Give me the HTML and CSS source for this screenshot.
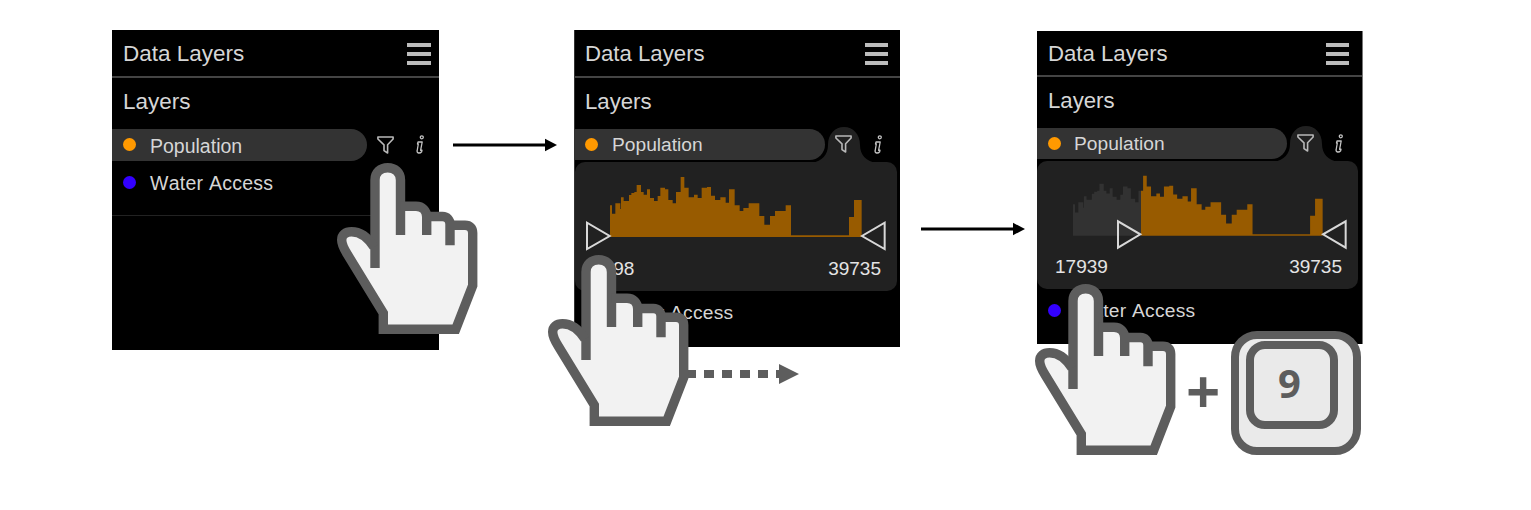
FILE: index.html
```html
<!DOCTYPE html>
<html lang="en">
<head>
<meta charset="utf-8">
<title>Data Layers</title>
<link rel="stylesheet" href="styles.css">
</head>
<body>
<svg class="defs" width="0" height="0" aria-hidden="true">
  <defs>
    <g id="hand">
      <path fill="#f2f2f2" stroke="none" d="M38 84C33 76 26 68.7 14.5 68.7C8 68.7 4.7 72 4.7 77C4.700 82 7 86 10 91L46.500 149.500V166H119L135.700 122V73C135.700 66 132 62.300 126 62.300H113C113 57 108 53.700 103 53.700H89.700C89.700 47 85 43.300 79 43.300H63.500V17C63.500 10 58 4.600 50.700 4.600S38 10 38 17Z"/>
      <g fill="none" stroke="#5d5d5d" stroke-width="9.400">
        <path d="M38 105V17C38 9.500 43.500 4.700 50.700 4.700S63.500 9.500 63.500 17V72"/>
        <path d="M63.500 43.300H79C85.500 43.300 89.700 47.500 89.700 54V72"/>
        <path d="M90 53.500H105.500C110 53.500 113 56.500 113 61.500V82.300"/>
        <path d="M113 62.300H128C133 62.300 135.700 65 135.700 70V122.500L118.700 166.200H46.300V150L10.500 91.500C7 86 4.700 82 4.700 77C4.700 71.500 8.500 68.700 14.500 68.700C24 68.700 31 74.500 37 84"/>
      </g>
    </g>
    <g id="funnel" fill="none" stroke="#b8b8b8" stroke-width="1.600" stroke-linejoin="round">
      <path d="M.9 1H16.100V3L10.600 8.800V17L7 14.600V8.800L.9 3Z"/>
    </g>
    <g id="info" fill="none" stroke="#c4c4c4" stroke-width="1.300" stroke-linejoin="round">
      <circle cx="5.800" cy="2.300" r="1.500"/>
      <path d="M2 7H6.200L4.600 15.300L6 15.200L5.700 16.700Q4.400 18.200 2.600 18Q.7 17.600 1.200 15.500L2.300 9H1.500Z"/>
    </g>
    <path id="bars" d="M0 95V0H6V25H16V-6H31V11H33V-24H41V-13H57V-31H64V-37H73V-40H80V-61H93V-40H101V-32H111V-48H120V-22H132V-13H143V-28H151V-53H165V-48H175V-16H188V-6H198V-40H212V-85H223V-53H236V-24H252V-32H263V-22H275V-53H291V-55H303V-29H315V-16H331V-24H347V-8H357V-48H374V0H389V17H400V8H416V-6H448V32H463V58H480V32H495V17H527V0H543V90H717V35H732V-16H755V95Z"/>
    <clipPath id="excluded"><rect x="0" y="-90" width="205.600" height="190"/></clipPath>
    <clipPath id="included"><rect x="205.600" y="-90" width="560" height="190"/></clipPath>
  </defs>
</svg>

<main class="steps">
  <section class="panel panel-a">
    <header class="head"><h1>Data Layers</h1><span class="menu"><i></i><i></i><i></i></span></header>
    <h2>Layers</h2>
    <div class="row">
      <div class="pill"><span class="dot orange"></span><span class="name">Population</span></div>
      <svg class="funnel" width="17" height="18"><use href="#funnel"/></svg>
      <svg class="info" width="8" height="19"><use href="#info"/></svg>
    </div>
    <div class="row plain"><span class="dot blue"></span><span class="name">Water Access</span></div>
    <svg class="hand" width="141" height="172"><use href="#hand"/></svg>
  </section>

  <svg class="arrow arrow-a" width="104" height="14"><path d="M0 7H94" stroke="#000" stroke-width="3"/><path d="M92 .8L104 7L92 13.200Z"/></svg>

  <section class="panel panel-b">
    <header class="head"><h1>Data Layers</h1><span class="menu"><i></i><i></i><i></i></span></header>
    <h2>Layers</h2>
    <div class="row">
      <svg class="tab" width="66" height="36"><path fill="#212121" d="M0 36C10 34 16 28 16 18C16 7 23 0 32 0S48 7 48 18C48 28 54 34 64 36Z"/></svg>
      <div class="pill"><span class="dot orange"></span><span class="name">Population</span></div>
      <svg class="funnel" width="17" height="18"><use href="#funnel"/></svg>
      <svg class="info" width="8" height="19"><use href="#info"/></svg>
    </div>
    <div class="detail">
      <svg class="chart" width="322" height="90" viewBox="15 6 966 270">
        <use href="#bars" x="120" y="136" fill="#985b00"/>
        <g fill="none" stroke="#d8d8d8" stroke-width="6"><path d="M51 188V267L119 228Z"/><path d="M944 188V267L876 228Z"/></g>
      </svg>
      <div class="range"><span>2598</span><span>39735</span></div>
    </div>
    <div class="row plain"><span class="dot blue"></span><span class="name">Water Access</span></div>
    <svg class="drag" width="114" height="20"><g fill="#5d5d5d"><path d="M0 6H11V14H0ZM19 6H29V14H19ZM37 6H47V14H37ZM55 6H65V14H55ZM73 6H83V14H73ZM91 6H95V14H91ZM94 0L114 10L94 20Z"/></g></svg>
    <svg class="hand" width="141" height="172"><use href="#hand"/></svg>
  </section>

  <svg class="arrow arrow-b" width="104" height="14"><path d="M0 7H94" stroke="#000" stroke-width="3"/><path d="M92 .8L104 7L92 13.200Z"/></svg>

  <section class="panel panel-c">
    <header class="head"><h1>Data Layers</h1><span class="menu"><i></i><i></i><i></i></span></header>
    <h2>Layers</h2>
    <div class="row">
      <svg class="tab" width="66" height="36"><path fill="#212121" d="M0 36C10 34 16 28 16 18C16 7 23 0 32 0S48 7 48 18C48 28 54 34 64 36Z"/></svg>
      <div class="pill"><span class="dot orange"></span><span class="name">Population</span></div>
      <svg class="funnel" width="17" height="18"><use href="#funnel"/></svg>
      <svg class="info" width="8" height="19"><use href="#info"/></svg>
    </div>
    <div class="detail">
      <svg class="chart" width="321" height="90" viewBox="21 3 963 270">
        <g transform="translate(129 132.500) scale(.992 1)">
          <use href="#bars" fill="#323232" clip-path="url(#excluded)"/>
          <use href="#bars" fill="#985b00" clip-path="url(#included)"/>
        </g>
        <g fill="none" stroke="#d8d8d8" stroke-width="6"><path d="M264 184V263L331 223Z"/><path d="M947 184V263L879 223Z"/></g>
      </svg>
      <div class="range"><span>17939</span><span>39735</span></div>
    </div>
    <div class="row plain"><span class="dot blue"></span><span class="name">Water Access</span></div>
    <svg class="hand" width="141" height="172"><use href="#hand"/></svg>
    <span class="plus">+</span>
    <div class="key"><span class="cap">9</span></div>
  </section>
</main>
</body>
</html>
```

FILE: styles.css
```css
* { box-sizing: border-box; }
body { margin: 0; background: #fff; font-family: "Liberation Sans", Arial, sans-serif; }
.defs { position: absolute; }
.steps { display: flex; align-items: flex-start; width: 1531px; height: 510px; padding: 30px 0 0 112px; }
.panel { position: relative; flex: none; background: #000; color: #d6d6d6; }
.panel-a { width: 327px; height: 320px; }
.panel-b { width: 326px; height: 317px; border-left: 1px solid #333; }
.panel-c { width: 326px; height: 313px; margin-top: 1px; border-right: 1px solid #777; }

.head { display: flex; justify-content: space-between; align-items: center; height: 48px; padding: 2px 8px 0 11px; border-bottom: 2px solid #444; }
h1, h2 { margin: 0; font-weight: 400; font-size: 22.5px; white-space: nowrap; }
h2 { height: 50px; padding-left: 11px; line-height: 47px; }
.menu { display: flex; flex-direction: column; gap: 5px; width: 24px; }
.menu i { height: 4px; background: #bcbcbc; }

.row { position: relative; display: flex; align-items: center; height: 33px; }
.pill { position: relative; display: flex; align-items: center; width: 255px; height: 32px; padding-left: 11px; background: #333; border-radius: 0 16px 16px 0; }
.dot { flex: none; width: 13px; height: 13px; border-radius: 50%; }
.orange { background: #ff9900; }
.blue { background: #3300ff; }
.name { margin-left: 14px; font-size: 19.5px; line-height: 32px; padding-top: 2px; white-space: nowrap; }
.funnel { position: relative; flex: none; margin-left: 10px; }
.info { flex: none; margin-left: 22px; }
.plain { padding-left: 11px; }
.plain .name { font-kerning: none; letter-spacing: .25px; }
.panel-a .plain { height: 55px; padding-bottom: 12px; border-bottom: 1px solid #222; }
.tab { position: absolute; left: 237px; top: -1px; }

.panel-b .head { padding: 1px 12px 0 10px; }
.panel-b .menu, .panel-c .menu { width: 23px; }
.panel-b h1, .panel-b h2 { font-size: 22.2px; }
.panel-b h2, .panel-b .plain, .panel-b .pill { padding-left: 10px; }
.panel-b .pill { width: 250px; height: 31px; }
.panel-b .row, .panel-c .row { height: 32px; }
.panel-b .name, .panel-c .name { font-size: 19.2px; }
.panel-b .info { margin-left: 22px; }
.panel-c .head { height: 46px; padding-right: 13px; }
.panel-c h1, .panel-c h2 { font-size: 22.2px; }
.panel-c .pill { width: 250px; height: 31px; }
.panel-c .name { margin-left: 13px; }
.panel-c .info { margin-left: 21px; }

.detail { position: relative; width: 322px; height: 129px; margin-top: 2px; overflow: hidden; background: #212121; border-radius: 10px; }
.chart { display: block; }
.range { display: flex; justify-content: space-between; padding: 5px 16px 0 17px; color: #e4e4e4; font-size: 19px; line-height: 24px; }
.panel-c .detail { width: 321px; height: 128px; }
.panel-c .range { padding: 4px 16px 0 18px; }
.panel-b .plain { margin-top: 5px; }
.panel-c .plain { margin-top: 5px; }

.arrow { flex: none; }
.arrow-a { margin: 108px 17px 0 14px; }
.arrow-b { margin: 192px 12px 0 21px; }

.hand { position: absolute; overflow: visible; }
.panel-a .hand { left: 225px; top: 133px; }
.panel-b .hand { left: -27px; top: 225px; }
.panel-c .hand { left: -2px; top: 253px; }
.drag { position: absolute; left: 110px; top: 334px; }

.plus { position: absolute; left: 149px; top: 328px; width: 34px; text-align: center; color: #5d5d5d; font: 700 60px/64px "Open Sans", "Noto Sans", sans-serif; }
.key { position: absolute; left: 194px; top: 300px; width: 130px; height: 124px; padding: 2px 7px; background: #eaeaea; border: 8px solid #5d5d5d; border-radius: 26px; }
.cap { display: flex; align-items: center; justify-content: center; width: 92px; height: 88px; border: 8px solid #5d5d5d; border-radius: 19px; color: #5d5d5d; font: 700 40px/40px "Noto Sans", "Open Sans", sans-serif; padding: 0 5px 5px 0; }
```
